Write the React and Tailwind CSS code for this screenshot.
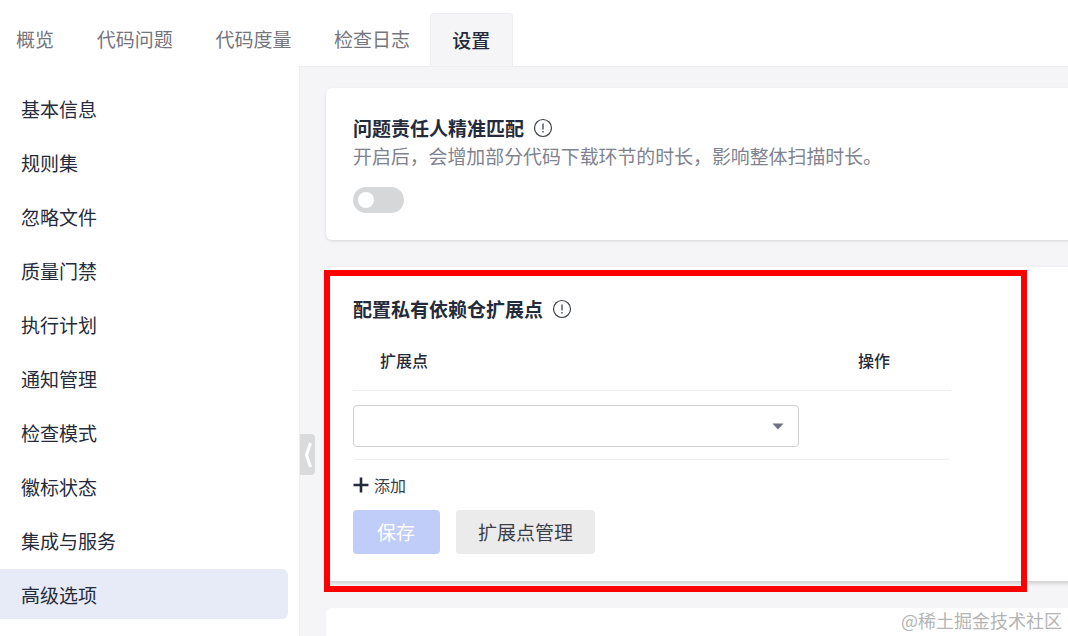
const menu = ['基本信息', '规则集', '忽略文件', '质量门禁', '执行计划', '通知管理', '检查模式', '徽标状态', '集成与服务', '高级选项'];
const tabs = ['概览', '代码问题', '代码度量', '检查日志'];

function InfoIcon() {
    return (
        <svg width="20" height="20" viewBox="0 0 20 20" fill="none" className="ml-[9px] shrink-0">
            <circle cx="10" cy="10" r="8.5" stroke="#3b3f4a" strokeWidth="1.2" />
            <path d="M10 5.6v5.8" stroke="#3b3f4a" strokeWidth="1.3" />
            <path d="M10 12.9v1.5" stroke="#3b3f4a" strokeWidth="1.3" />
        </svg>
    );
}

export default function App() {
    return (
        <div className="relative h-[636px] w-[1068px] overflow-hidden bg-white font-['Noto_Sans_CJK_SC','Noto_Sans',sans-serif] text-[#252b3a]">
            {/* Tabs */}
            <div className="flex h-[66px] items-end pl-4">
                {tabs.map((t) => (
                    <div key={t} className="mr-[42.7px] flex h-[53px] items-center text-[19px] text-[#75757f]">
                        {t}
                    </div>
                ))}
                <div className="-ml-[23px] flex h-[53px] w-[83px] items-center justify-center rounded-t border border-b-0 border-[#eeeef0] bg-[#f5f5f7] text-[19px] font-medium text-[#252b3a]">
                    设置
                </div>
            </div>

            <div className="flex">
                {/* Sidebar */}
                <div className="flex w-[299px] shrink-0 flex-col gap-[5px] pt-[18px] pr-[11px]">
                    {menu.map((m) => (
                        <div
                            key={m}
                            className={
                                m === '高级选项'
                                    ? '-mt-px flex h-[50px] items-center rounded-r-md bg-[#e7ebf8] pt-[2px] pl-[21px] text-[19px] text-[#252b3a]'
                                    : 'flex h-[49px] items-center pt-px pl-[21px] text-[19px] text-[#252b3a]'
                            }
                        >
                            {m}
                        </div>
                    ))}
                </div>

                {/* Content */}
                <div className="h-[570px] flex-1 border-t border-l border-[#eeeef0] bg-[#f5f5f7] pt-[21px] pl-[26px]">
                    <div className="h-[152px] w-[800px] rounded-md bg-white pt-[27px] pl-[27px] shadow-[0_1px_3px_rgba(0,0,0,0.12)]">
                        <div className="flex h-[26px] items-center text-[19px] leading-[26px] font-bold">
                            问题责任人精准匹配
                            <InfoIcon />
                        </div>
                        <div className="mt-[2px] text-[18.9px] leading-[26px] whitespace-nowrap text-[#80838e]">
                            开启后，会增加部分代码下载环节的时长，影响整体扫描时长。
                        </div>
                        <div className="mt-[18px] flex h-[26px] w-[51px] items-center rounded-full bg-[#d6d7d9] pl-[5px]">
                            <div className="h-[16px] w-[16px] rounded-full bg-white" />
                        </div>
                    </div>

                    <div className="mt-[27px] h-[314px] w-[800px] rounded-md bg-white pt-[29px] pl-[27px] shadow-[0_2px_4px_rgba(0,0,0,0.18)]">
                        <div className="flex h-[26px] items-center text-[19px] leading-[26px] font-bold">
                            配置私有依赖仓扩展点
                            <InfoIcon />
                        </div>

                        <div className="mt-[8px] flex h-[61px] w-[598px] items-center border-b border-[#eeeef0] text-[16px] font-medium">
                            <div className="w-[505px] pl-[27px]">扩展点</div>
                            <div>操作</div>
                        </div>
                        <div className="flex h-[69px] w-[597px] items-center rounded-b border-b border-[#eeeef0] pt-[2px]">
                            <div className="flex h-[42px] w-[446px] items-center justify-end rounded border border-[#d0d1d4] bg-white pr-[14px]">
                                <svg width="12" height="7" viewBox="0 0 12 7">
                                    <path d="M0.5 0.5h11L6 6.5z" fill="#6e7080" />
                                </svg>
                            </div>
                        </div>

                        <div className="mt-[14px] flex h-[22px] items-center text-[16px] text-[#3b3f4a]">
                            <svg width="16" height="16" viewBox="0 0 16 16" className="mr-[5px]">
                                <path d="M8 0.5v15M0.5 8h15" stroke="#252b3a" strokeWidth="2.6" />
                            </svg>
                            添加
                        </div>

                        <div className="mt-[14px] flex gap-4">
                            <div className="flex h-[44px] w-[87px] items-center justify-center rounded bg-[#bfcdf8] pr-px text-[19px] text-white">
                                保存
                            </div>
                            <div className="flex h-[44px] w-[139px] items-center justify-center rounded bg-[#ebebeb] text-[19px] text-[#3b3f4a]">
                                扩展点管理
                            </div>
                        </div>
                    </div>

                    <div className="mt-[27px] h-[100px] w-[800px] rounded-md bg-white" />
                </div>
            </div>

            {/* Collapse handle */}
            <div className="absolute top-[434px] left-[300px] flex h-[41px] w-[15px] items-center justify-center rounded-r bg-[#d9dadc]">
                <svg width="8" height="26" viewBox="0 0 8 26">
                    <path d="M6.5 1L2.5 13l4 12" fill="none" stroke="#ffffff" strokeWidth="3" />
                </svg>
            </div>

            {/* Red annotation */}
            <div className="absolute top-[270px] left-[324px] h-[322px] w-[703px] border-[6px] border-[#ff0000]" />

            {/* Watermark */}
            <div className="absolute top-[607px] right-[6px] text-[18px] leading-[26px] whitespace-nowrap text-[#b4b4b4]">
                @稀土掘金技术社区
            </div>
        </div>
    );
}
